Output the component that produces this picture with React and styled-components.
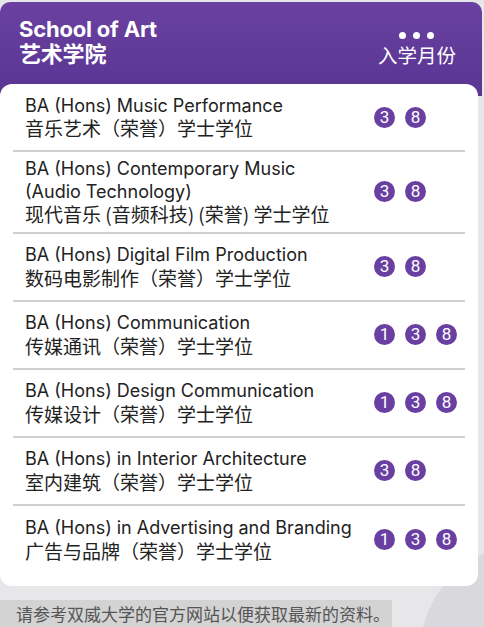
import styled, { createGlobalStyle } from "styled-components";

const GlobalStyle = createGlobalStyle`
  html, body {
    margin: 0;
    padding: 0;
  }
  body {
    background-color: #e7e7e9;
    background-image: radial-gradient(circle at 532px 655px, #d9d9dd 0 112px, transparent 113px);
    background-repeat: no-repeat;
    font-family: Inter, "Noto Sans CJK SC", sans-serif;
    height: 627px;
    overflow: hidden;
  }
`;

const Page = styled.div`
  padding: 2px 2px 0 0;
`;

const Section = styled.section`
  display: flex;
  flex-direction: column;
`;

const Header = styled.header`
  display: flex;
  justify-content: space-between;
  align-items: flex-start;
  padding: 15px 26px 28px 19px;
  border-radius: 10px 10px 0 0;
  background: linear-gradient(180deg, #6a41a1 0%, #5a3592 100%);
  color: #fff;
`;

const Title = styled.div`
  display: flex;
  flex-direction: column;
  font-size: 22px;
  font-weight: 700;
  line-height: 25px;
  letter-spacing: -0.2px;
`;

const MonthHead = styled.div`
  display: flex;
  flex-direction: column;
  align-items: center;
  padding-top: 13px;
  font-size: 19.5px;
  line-height: 24px;
`;

const Dots = styled.div`
  display: flex;
  gap: 7px;
  height: 10px;
  align-items: center;
  margin-bottom: 4px;
`;

const Dot = styled.span`
  width: 7px;
  height: 7px;
  border-radius: 50%;
  background: #fff;
`;

const Card = styled.ul`
  list-style: none;
  margin: -12px 4px 0 0;
  padding: 0 0 12px;
  background: #fff;
  border-radius: 12px;
`;

const Row = styled.li`
  display: flex;
  align-items: center;
  min-height: 68px;
  box-sizing: border-box;
  margin: 0 13px;
  padding: 6px 8px 6px 12px;
  border-bottom: ${(p) => (p.$last ? "none" : "2px solid #cfcfcf")};
`;

const Names = styled.div`
  flex: 1;
  display: flex;
  flex-direction: column;
  color: #222;
  font-size: 18px;
  line-height: 22.5px;
  white-space: pre-line;
`;

const Chinese = styled.span`
  font-family: "Noto Sans CJK SC", sans-serif;
  font-size: 19px;
`;

const Months = styled.div`
  width: 83px;
  display: flex;
  gap: 10px;
`;

const Badge = styled.span`
  width: 21px;
  height: 21px;
  border-radius: 50%;
  background: #6a3fa2;
  color: #fff;
  display: flex;
  align-items: center;
  justify-content: center;
  font-family: Roboto, sans-serif;
  font-size: 17px;
  font-weight: 400;
  line-height: 1;
`;

const Note = styled.p`
  margin: 14px 0 0;
  width: 392px;
  box-sizing: border-box;
  padding: 3px 0 6px 16px;
  background: #d3d3d3;
  color: #555;
  font-family: "Noto Sans CJK SC", sans-serif;
  font-size: 17px;
  line-height: 22px;
`;

const programmes = [
  { en: "BA (Hons) Music Performance", zh: "音乐艺术（荣誉）学士学位", months: [3, 8] },
  { en: "BA (Hons) Contemporary Music\n(Audio Technology)", zh: "现代音乐 (音频科技) (荣誉) 学士学位", months: [3, 8] },
  { en: "BA (Hons) Digital Film Production", zh: "数码电影制作（荣誉）学士学位", months: [3, 8] },
  { en: "BA (Hons) Communication", zh: "传媒通讯（荣誉）学士学位", months: [1, 3, 8] },
  { en: "BA (Hons) Design Communication", zh: "传媒设计（荣誉）学士学位", months: [1, 3, 8] },
  { en: "BA (Hons) in Interior Architecture", zh: "室内建筑（荣誉）学士学位", months: [3, 8] },
  { en: "BA (Hons) in Advertising and Branding", zh: "广告与品牌（荣誉）学士学位", months: [1, 3, 8] },
];

export default function App() {
  return (
    <Page>
      <GlobalStyle />
      <Section>
        <Header>
          <Title>
            <span>School of Art</span>
            <span>艺术学院</span>
          </Title>
          <MonthHead>
            <Dots>
              <Dot />
              <Dot />
              <Dot />
            </Dots>
            <span>入学月份</span>
          </MonthHead>
        </Header>
        <Card>
          {programmes.map((p, i) => (
            <Row key={p.en} $last={i === programmes.length - 1}>
              <Names>
                <span>{p.en}</span>
                <Chinese>{p.zh}</Chinese>
              </Names>
              <Months>
                {p.months.map((m) => (
                  <Badge key={m}>{m}</Badge>
                ))}
              </Months>
            </Row>
          ))}
        </Card>
      </Section>
      <Note>请参考双威大学的官方网站以便获取最新的资料。</Note>
    </Page>
  );
}
